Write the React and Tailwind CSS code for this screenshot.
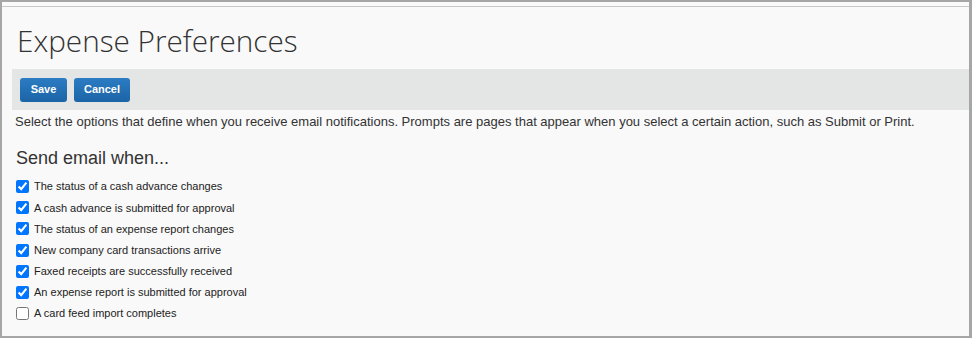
import React from "react";

const items = [
  ["The status of a cash advance changes", true],
  ["A cash advance is submitted for approval", true],
  ["The status of an expense report changes", true],
  ["New company card transactions arrive", true],
  ["Faxed receipts are successfully received", true],
  ["An expense report is submitted for approval", true],
  ["A card feed import completes", false],
];

export default function App() {
  return (
    <div className="w-[972px] h-[338px] bg-[#a6a6a6] pt-[2px] pl-[2px] pr-[3px] pb-[2px] overflow-hidden">
      <div className="h-full flex flex-col bg-[#f9f9f9]">
        <div className="h-[5px] bg-[#fafafa] border-b border-[#c8c8c8] shrink-0" />
        <div className="flex-1 bg-[#f9f9f9] pl-[10px]">
          <h1
            className="h-[62px] pt-[15px] pl-[5px] text-[29.7px] leading-[38px] font-light text-[#333]"
            style={{ fontFamily: '"Open Sans", sans-serif' }}
          >
            Expense Preferences
          </h1>
          <div className="h-[41px] bg-[#e4e5e5] flex items-center gap-[7px] pl-[8px]">
            <button className="h-[24px] w-[47px] rounded-[3px] bg-gradient-to-b from-[#2c7cc3] to-[#1b64a6] text-white text-[11px] font-bold" style={{ fontFamily: '"Liberation Sans", Arial, sans-serif' }}>
              Save
            </button>
            <button className="h-[24px] w-[56px] rounded-[3px] bg-gradient-to-b from-[#2c7cc3] to-[#1b64a6] text-white text-[11px] font-bold" style={{ fontFamily: '"Liberation Sans", Arial, sans-serif' }}>
              Cancel
            </button>
          </div>
          <div style={{ fontFamily: '"Liberation Sans", Arial, sans-serif' }} className="text-[#333]">
            <p className="pl-[3px] pt-[4px] text-[13px] leading-[16px]">
              Select the options that define when you receive email notifications. Prompts are pages that appear when you select a certain action, such as Submit or Print.
            </p>
            <h2 className="pl-[4px] mt-[17px] text-[18px] leading-[22px]">Send email when...</h2>
            <div className="mt-[7px] flex flex-col">
              {items.map(([label, checked]) => (
                <label key={label} className="h-[21.2px] flex items-center text-[11px] text-[#222]">
                  <input type="checkbox" defaultChecked={checked} className="w-[13px] h-[13px] ml-[4px] mr-[5px] accent-[#0075ff]" />
                  {label}
                </label>
              ))}
            </div>
          </div>
        </div>
      </div>
    </div>
  );
}
